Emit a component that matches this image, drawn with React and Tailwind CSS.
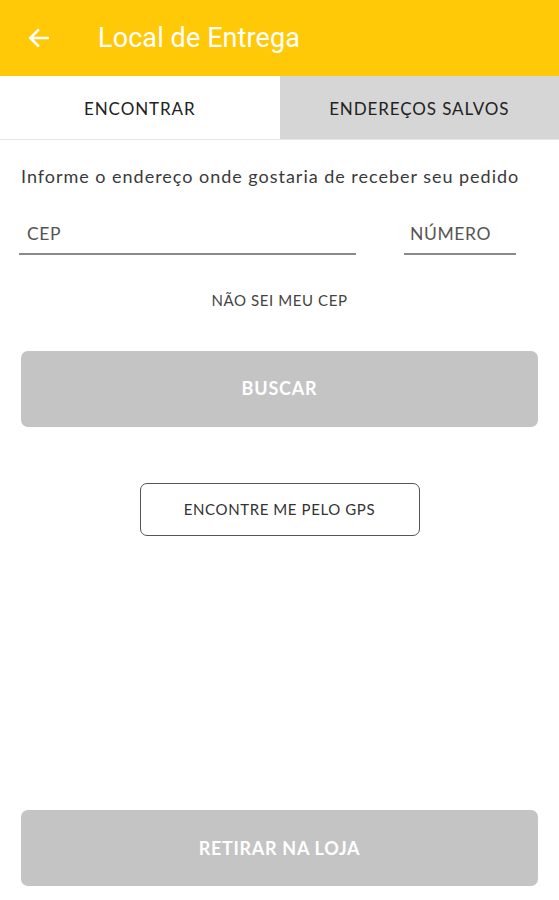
import React from 'react';

const App = () => {
  return (
    <div className="w-[559px] h-[900px] bg-white flex flex-col font-['Lato',sans-serif]">
      {/* header */}
      <div className="h-[76px] bg-[#ffc907] flex items-center px-[26px] shrink-0">
        <svg width="26" height="26" viewBox="0 0 24 24" fill="none" stroke="white" strokeWidth="2.4" strokeLinecap="square">
          <path d="M20 12H5M11 5l-7 7 7 7" />
        </svg>
        <span className="ml-[46px] text-white text-[27px] font-['Roboto',sans-serif] tracking-[0.1px]">Local de Entrega</span>
      </div>

      {/* tabs */}
      <div className="flex h-[64px] border-b border-[#e6e6e6] shrink-0">
        <button className="flex-1 bg-white text-[#222] text-[17px] tracking-[0.9px] pt-[3px]">ENCONTRAR</button>
        <button className="flex-1 bg-[#d6d6d6] text-[#222] text-[17px] tracking-[0.9px] pt-[3px]">ENDEREÇOS SALVOS</button>
      </div>

      <div className="flex flex-col flex-1 px-[21px]">
        <p className="mt-[23px] text-[18px] text-[#3a3a3a] tracking-[0.98px] whitespace-nowrap">Informe o endereço onde gostaria de receber seu pedido</p>

        <div className="flex justify-between mt-[31px] -ml-[2px] mr-[22px]">
          <div className="w-[337px] border-b-2 border-[#8a8a8a] pb-[6px] pl-[8px] text-[17.5px] text-[#555] tracking-[0.6px]">CEP</div>
          <div className="w-[112px] border-b-2 border-[#8a8a8a] pb-[6px] pl-[6px] text-[17.5px] text-[#555] tracking-[0.6px]">NÚMERO</div>
        </div>

        <div className="mt-[34px] text-center text-[15px] text-[#444] tracking-[0.6px]">NÃO SEI MEU CEP</div>

        <button className="mt-[39px] h-[76px] w-full rounded-[7px] bg-[#c4c4c4] text-white font-bold text-[18px] tracking-[0.8px]">BUSCAR</button>

        <div className="flex justify-center mt-[56px]">
          <button className="w-[280px] h-[53px] rounded-[7px] border border-[#555] bg-white text-[#333] text-[15px] tracking-[0.6px]">ENCONTRE ME PELO GPS</button>
        </div>

        <div className="flex-1" />

        <button className="mb-[14px] h-[76px] w-full rounded-[7px] bg-[#c4c4c4] text-white font-bold text-[18px] tracking-[0.7px]">RETIRAR NA LOJA</button>
      </div>
    </div>
  );
};

export default App;
